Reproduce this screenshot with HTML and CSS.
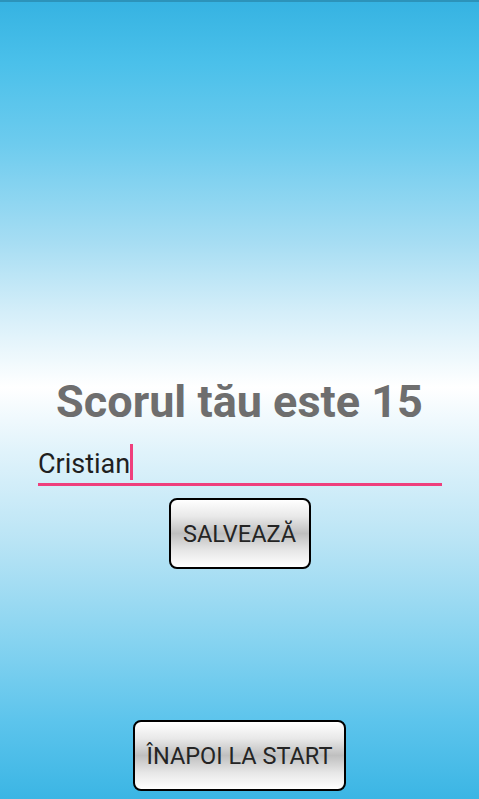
FILE: index.html
```html
<!DOCTYPE html>
<html lang="ro">
<head>
<meta charset="utf-8">
<title>Scor</title>
<link rel="stylesheet" href="styles.css">
</head>
<body>
<main class="screen">
  <section class="result">
    <h1 class="score">Scorul tău este 15</h1>
    <div class="field">
      <span class="field-text">Cristian</span><span class="caret"></span>
    </div>
    <button class="btn btn-save" type="button">SALVEAZĂ</button>
  </section>
  <footer class="bottom">
    <button class="btn btn-back" type="button">ÎNAPOI LA START</button>
  </footer>
</main>
</body>
</html>
```

FILE: styles.css
```css
html, body {
  margin: 0;
  padding: 0;
}
body {
  width: 479px;
  height: 799px;
  overflow: hidden;
  font-family: Roboto, "Liberation Sans", sans-serif;
}
.screen {
  box-sizing: border-box;
  height: 799px;
  display: flex;
  flex-direction: column;
  align-items: center;
  border-top: 2px solid #2c93ba;
  background: linear-gradient(to bottom,
    #36b3e2 0px,
    #4ac0ea 60px,
    #6ccbee 140px,
    #a6ddf3 240px,
    #d4eef9 310px,
    #ffffff 385px,
    #e0f3fb 450px,
    #b9e4f5 540px,
    #86d3f0 640px,
    #5cc4ec 720px,
    #3ab5e4 799px);
}
.result {
  width: 100%;
  display: flex;
  flex-direction: column;
  align-items: center;
  padding-top: 375px;
}
.score {
  margin: 0;
  font-size: 45px;
  font-weight: 700;
  color: #6e6e6e;
  line-height: 50px;
}
.field {
  box-sizing: border-box;
  width: 404px;
  margin-top: 17px;
  height: 42px;
  display: flex;
  align-items: flex-end;
  padding-bottom: 3px;
  border-bottom: 3px solid #ef3f7c;
  align-self: flex-start;
  margin-left: 38px;
}
.field-text {
  font-size: 27px;
  color: #1f1f1f;
  line-height: 28px;
  padding-bottom: 2px;
}
.caret {
  width: 3px;
  height: 36px;
  background: #ef3f7c;
  margin-left: 0;
}
.btn {
  box-sizing: border-box;
  height: 71px;
  border: 2px solid #000;
  border-radius: 8px;
  background: linear-gradient(to bottom, #ffffff 0%, #e8e8e8 25%, #bfbfbf 50%, #e6e6e6 75%, #ffffff 100%);
  font-family: Roboto, "Liberation Sans", sans-serif;
  font-size: 23.5px;
  color: #242424;
  padding: 0;
}
.btn-save {
  width: 142px;
  margin-top: 12px;
}
.bottom {
  margin-top: auto;
  padding-bottom: 8px;
}
.btn-back {
  width: 213px;
}
```
